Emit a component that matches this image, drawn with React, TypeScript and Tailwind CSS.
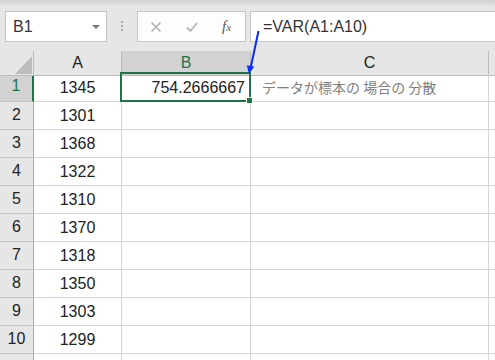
import React from "react";

const values = ["1345", "1301", "1368", "1322", "1310", "1370", "1318", "1350", "1303", "1299"];
const cols = "grid grid-cols-[34px_88px_129px_238px_1fr]";

export default function App() {
  return (
    <div className="relative h-[360px] w-[495px] overflow-hidden bg-white font-['Liberation_Sans',Arial,sans-serif] text-[#222]">
      {/* top bar */}
      <div className="flex h-[51px] items-start bg-[linear-gradient(#d2d2d2,#e6e6e6_7px)] pt-[11px]">
        <div className="ml-[5px] flex h-[31px] w-[102px] items-center justify-between border border-[#c6c6c6] bg-white pl-[7px] pr-[6px] text-[16px] text-[#333]">
          <span className="pt-[1px]">B1</span>
          <svg width="8" height="4" viewBox="0 0 8 4">
            <polygon points="0,0 8,0 4,4" fill="#777" />
          </svg>
        </div>
        <div className="ml-[14px] mt-[10px] flex flex-col gap-[2px]">
          <div className="h-[2px] w-[2px] bg-[#a8a8a8]" />
          <div className="h-[2px] w-[2px] bg-[#a8a8a8]" />
          <div className="h-[2px] w-[2px] bg-[#a8a8a8]" />
        </div>
        <div className="ml-[14px] flex h-[31px] w-[109px] items-center gap-[24px] border border-[#c6c6c6] bg-[#fdfdfd] pl-[12px]">
          <svg width="12" height="12" viewBox="0 0 12 12">
            <path d="M1.5 1.5 L10.5 10.5 M10.5 1.5 L1.5 10.5" stroke="#b4b4b4" strokeWidth="1.6" fill="none" />
          </svg>
          <svg width="12" height="12" viewBox="0 0 12 12">
            <path d="M1 6.5 L4.5 10 L11 2" stroke="#b4b4b4" strokeWidth="1.8" fill="none" />
          </svg>
          <span className="font-['Liberation_Serif',serif] text-[15px] italic leading-none text-[#555]">
            f<span className="text-[11px]">x</span>
          </span>
        </div>
        <div className="ml-[4px] flex h-[31px] flex-1 items-center border-y border-l border-[#c6c6c6] bg-white pl-[12px] text-[16px] text-[#333]">
          =VAR(A1:A10)
        </div>
      </div>

      {/* column headers */}
      <div className={`${cols} h-[23px] text-[16px]`}>
        <div className="relative border-b border-r border-[#bcbcbc] bg-[#e6e6e6]">
          <svg className="absolute bottom-[1px] right-[1px]" width="17" height="18" viewBox="0 0 17 18">
            <polygon points="17,0 17,18 0,18" fill="#bcbcbc" />
          </svg>
        </div>
        <div className="flex items-center justify-center border-b border-r border-[#bcbcbc] bg-[#e6e6e6]">A</div>
        <div className="flex items-center justify-center border-b border-r border-[#bcbcbc] bg-[#d2d2d2] text-[#217346]">B</div>
        <div className="flex items-center justify-center border-b border-r border-[#bcbcbc] bg-[#e6e6e6]">C</div>
        <div className="border-b border-[#bcbcbc] bg-[#e6e6e6]" />
      </div>

      {/* rows */}
      {values.map((v, i) => (
        <div key={i} className={`${cols} h-[28px] text-[16px]`}>
          <div
            className={
              i === 0
                ? "flex items-end justify-center border-b border-r-2 border-b-[#c8c8c8] border-r-[#217346] bg-[#d2d2d2] pb-[3px] text-[#217346]"
                : "flex items-end justify-center border-b border-r border-b-[#c8c8c8] border-r-[#ababab] bg-[#e6e6e6] pb-[2px]"
            }
          >
            {i + 1}
          </div>
          <div className="flex items-center justify-center border-b border-r border-[#d4d4d4]">{v}</div>
          <div className="flex items-center justify-end border-b border-r border-[#d4d4d4] pr-[5px]">
            {i === 0 ? "754.2666667" : ""}
          </div>
          <div className="flex items-center whitespace-nowrap border-b border-r border-[#d4d4d4] pl-[11px] font-['Noto_Sans_CJK_JP',sans-serif] text-[14px] text-[#808080]">
            {i === 0 ? "データが標本の 場合の 分散" : ""}
          </div>
          <div className="border-b border-[#d4d4d4]" />
        </div>
      ))}
      <div className={`${cols} h-[28px]`}>
        <div className="border-r border-[#ababab] bg-[#e6e6e6]" />
        <div className="border-r border-[#d4d4d4]" />
        <div className="border-r border-[#d4d4d4]" />
        <div className="border-r border-[#d4d4d4]" />
        <div />
      </div>

      {/* selection */}
      <div className="absolute left-[120px] top-[72px] h-[30px] w-[131px] border-2 border-[#217346]" />
      <div className="absolute left-[246px] top-[97px] h-[7px] w-[7px] border border-white bg-[#217346]" />

      {/* arrow */}
      <svg className="pointer-events-none absolute left-0 top-0" width="495" height="360" viewBox="0 0 495 360">
        <line x1="258.5" y1="31" x2="250.8" y2="67" stroke="#0a2cf5" strokeWidth="2" />
        <polygon points="249,74 254.2,66.6 246.8,65.2" fill="#0a2cf5" />
      </svg>
    </div>
  );
}
